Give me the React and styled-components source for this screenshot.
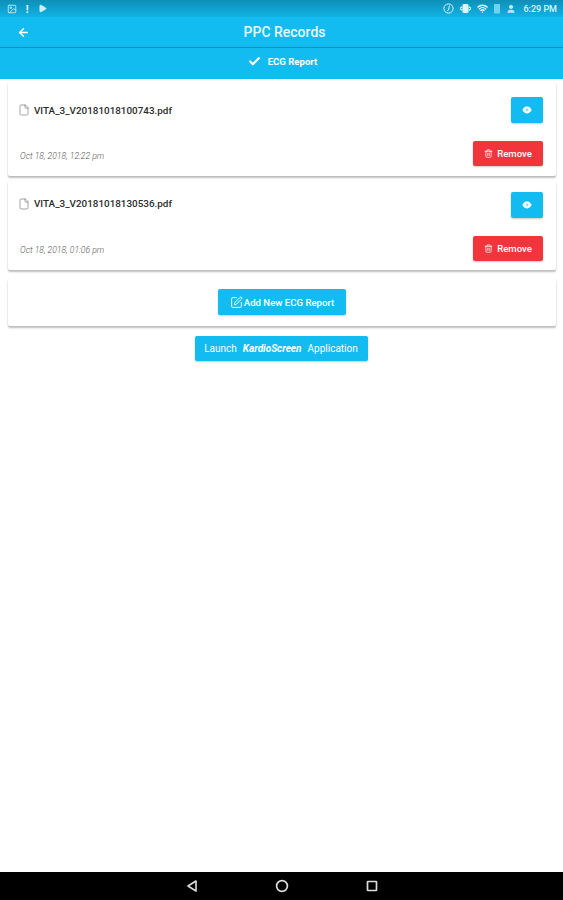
import React from "react";
import styled, { createGlobalStyle } from "styled-components";
import { Check, Trash2, SquarePen, File, ArrowLeft, Image, Wifi, User, Play } from "lucide-react";

const GlobalStyle = createGlobalStyle`
  html, body {
    margin: 0;
    padding: 0;
    background: #fff;
  }
  * {
    box-sizing: border-box;
  }
`;

const Page = styled.div`
  width: 563px;
  height: 900px;
  display: flex;
  flex-direction: column;
  overflow: hidden;
  font-family: Roboto, "Liberation Sans", sans-serif;
  background: #fff;
`;

const Header = styled.header`
  height: 79px;
  flex: none;
  display: flex;
  flex-direction: column;
  background: #12bcf0;
  color: #fff;
`;

const StatusBar = styled.div`
  height: 17px;
  flex: none;
  display: flex;
  align-items: center;
  justify-content: space-between;
  padding: 0 6px 0 7px;
  background: linear-gradient(#0e8fb8, #11b2e4);
`;

const StatusGroup = styled.div`
  display: flex;
  align-items: center;
  gap: ${(p) => p.$gap}px;
`;

const Clock = styled.span`
  font-size: 9px;
  font-weight: 500;
  margin-left: 2px;
  color: #dff4fb;
`;

const Toolbar = styled.div`
  height: 31px;
  flex: none;
  display: grid;
  grid-template-columns: 48px 1fr 42px;
  align-items: center;
  border-bottom: 1px solid #0e93bf;
`;

const BackButton = styled.div`
  display: flex;
  padding-left: 17px;
`;

const Title = styled.h1`
  margin: 0;
  font-size: 14px;
  font-weight: 500;
  text-align: center;
  color: #e6f8fd;
`;

const TabRow = styled.div`
  flex: 1;
  display: flex;
  align-items: center;
  justify-content: center;
  gap: 7px;
  padding: 0 0 4px 2px;
  font-size: 9.6px;
  font-weight: 700;
`;

const Content = styled.main`
  flex: 1;
  display: flex;
  flex-direction: column;
  align-items: center;
  padding: 3px 7px 0 8px;
`;

const Card = styled.section`
  width: 100%;
  height: ${(p) => p.$height}px;
  margin-bottom: ${(p) => p.$gap}px;
  display: flex;
  flex-direction: column;
  justify-content: space-between;
  padding: ${(p) => p.$pad};
  background: #fff;
  border-radius: 2px;
  box-shadow: 0 2px 2px rgba(0, 0, 0, 0.26), 0 0 2px rgba(0, 0, 0, 0.06);
`;

const Row = styled.div`
  display: flex;
  align-items: center;
  justify-content: space-between;
`;

const FileName = styled.div`
  display: flex;
  align-items: center;
  gap: 4px;
  padding: 0 0 ${(p) => p.$lift || 0}px 10px;
  font-size: 9.9px;
  font-weight: 500;
  color: #2c2c2c;
`;

const DateText = styled.span`
  padding: ${(p) => p.$drop}px 0 0 12px;
  font-size: 8.6px;
  font-style: italic;
  font-weight: 300;
  color: #555;
`;

const ActionButton = styled.button`
  display: flex;
  align-items: center;
  justify-content: center;
  gap: ${(p) => p.$gap || 3}px;
  width: ${(p) => p.$width}px;
  height: ${(p) => p.$height || 26}px;
  padding: 0;
  border: 0;
  border-radius: 2px;
  background: ${(p) => p.$bg || "#12bcf0"};
  color: #fff;
  font-family: inherit;
  font-size: ${(p) => p.$size || 9.6}px;
  font-weight: ${(p) => p.$weight || 500};
  box-shadow: 0 1px 2px rgba(0, 0, 0, 0.22);
`;

const LaunchButton = styled(ActionButton)`
  margin-right: 2px;
`;

const CenterCard = styled(Card)`
  align-items: center;
  justify-content: flex-start;
`;

const Brand = styled.em`
  font-weight: 700;
  margin: 0 3px;
`;

const NavBar = styled.nav`
  height: 28px;
  flex: none;
  display: flex;
  align-items: center;
  justify-content: center;
  gap: 76px;
  background: #000;
  color: #ddd;
`;

const EyeIcon = () => (
  <svg width="10" height="8" viewBox="0 0 10 8">
    <path d="M0.3 4 C2 1 3.6 0.6 5 0.6 C6.4 0.6 8 1 9.7 4 C8 7 6.4 7.4 5 7.4 C3.6 7.4 2 7 0.3 4 Z" fill="#fff" />
    <circle cx="5" cy="4" r="1.4" fill="#8fdcf5" />
  </svg>
);

const NavBack = () => (
  <svg width="14" height="14" viewBox="0 0 14 14" fill="none" stroke="currentColor" strokeWidth="1.6" strokeLinejoin="round">
    <path d="M11 2 L3 7 L11 12 Z" />
  </svg>
);

const NavHome = () => (
  <svg width="14" height="14" viewBox="0 0 14 14" fill="none" stroke="currentColor" strokeWidth="1.7">
    <circle cx="7" cy="7" r="5.4" />
  </svg>
);

const NavRecent = () => (
  <svg width="14" height="14" viewBox="0 0 14 14" fill="none" stroke="currentColor" strokeWidth="1.7">
    <rect x="2.5" y="2.5" width="9" height="9" rx="0.6" />
  </svg>
);

const records = [
  { name: "VITA_3_V20181018100743.pdf", date: "Oct 18, 2018, 12:22 pm", height: 94, gap: 5, pad: "15px 13px 10px 0", lift: 0, drop: 4 },
  { name: "VITA_3_V20181018130536.pdf", date: "Oct 18, 2018, 01:06 pm", height: 89, gap: 8, pad: "11px 13px 9px 0", lift: 3, drop: 2 },
];

const RecordCard = ({ record }) => (
  <Card $height={record.height} $gap={record.gap} $pad={record.pad}>
    <Row>
      <FileName $lift={record.lift}>
        <File size={12} strokeWidth={1.2} color="#666" />
        {record.name}
      </FileName>
      <ActionButton $width={32}>
        <EyeIcon />
      </ActionButton>
    </Row>
    <Row>
      <DateText $drop={record.drop}>{record.date}</DateText>
      <ActionButton $width={70} $bg="#f2353d" $gap={4} $height={25}>
        <Trash2 size={9} strokeWidth={2} />
        Remove
      </ActionButton>
    </Row>
  </Card>
);

const App = () => {
  return (
    <Page>
      <GlobalStyle />
      <Header>
        <StatusBar>
          <StatusGroup $gap={9}>
            <Image size={10} color="#cfeef8" />
            <svg width="3" height="8" viewBox="0 0 3 8" fill="#e6f8fd">
              <rect x="0.6" y="0" width="1.6" height="5.4" />
              <rect x="0.6" y="6.4" width="1.6" height="1.6" />
            </svg>
            <Play size={9} fill="#cfeef8" color="#cfeef8" />
          </StatusGroup>
          <StatusGroup $gap={5}>
            <svg width="11" height="11" viewBox="0 0 11 11" fill="none" stroke="#dff4fb" strokeWidth="1">
              <circle cx="5.5" cy="5.5" r="4.6" />
              <path d="M6.5 2.5 L5.5 7 L4 8" />
            </svg>
            <svg width="13" height="11" viewBox="0 0 13 11" fill="none" stroke="#dff4fb" strokeWidth="1.2">
              <path d="M1 5.5 L3 3.8 M12 5.5 L10 3.8 M1 5.5 L3 7.2 M12 5.5 L10 7.2" />
              <rect x="4" y="1.5" width="5" height="8" rx="1" fill="#dff4fb" />
            </svg>
            <Wifi size={11} strokeWidth={3} color="#eefafd" />
            <svg width="8" height="11" viewBox="0 0 8 11" fill="#6fd2ee">
              <rect x="1" y="1" width="6" height="9.5" rx="0.6" />
            </svg>
            <User size={10} fill="#bfe9f6" color="#bfe9f6" />
            <Clock>6:29 PM</Clock>
          </StatusGroup>
        </StatusBar>
        <Toolbar>
          <BackButton>
            <ArrowLeft size={13} strokeWidth={2.8} />
          </BackButton>
          <Title>PPC Records</Title>
        </Toolbar>
        <TabRow>
          <Check size={13} strokeWidth={4} />
          ECG Report
        </TabRow>
      </Header>
      <Content>
        {records.map((record) => (
          <RecordCard key={record.name} record={record} />
        ))}
        <CenterCard $height={48} $gap={10} $pad="11px 0 0">
          <ActionButton $width={128} $gap={1}>
            <SquarePen size={13} strokeWidth={1.8} />
            Add New ECG Report
          </ActionButton>
        </CenterCard>
        <LaunchButton $width={173} $weight={400} $height={25} $size={10}>
          Launch <Brand>KardioScreen</Brand> Application
        </LaunchButton>
      </Content>
      <NavBar>
        <NavBack />
        <NavHome />
        <NavRecent />
      </NavBar>
    </Page>
  );
};

export default App;
